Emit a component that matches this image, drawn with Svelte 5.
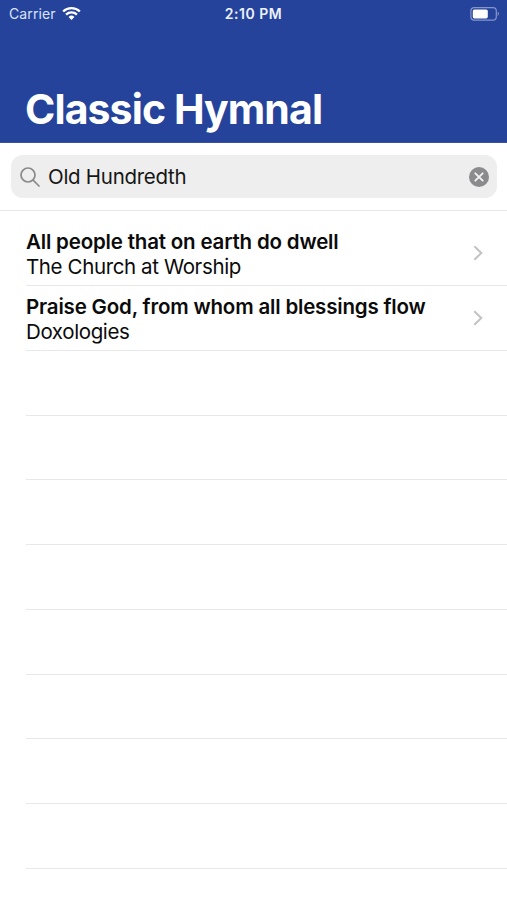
<script>
  let query = $state('Old Hundredth');

  const hymns = [
    { title: 'All people that on earth do dwell', section: 'The Church at Worship' },
    { title: 'Praise God, from whom all blessings flow', section: 'Doxologies' },
  ];
  const emptyRows = Array(8);
</script>

<div class="screen">
  <header>
    <div class="status">
      <div class="carrier">
        <span>Carrier</span>
        <svg class="wifi" viewBox="0 0 20 15" aria-hidden="true">
          <path d="M1.2 5.4a12.8 12.8 0 0 1 17.6 0" />
          <path d="M4.3 8.6a8.3 8.3 0 0 1 11.4 0" />
          <path class="dot" d="M6.9 11.2a4.5 4.5 0 0 1 6.2 0L10 14.4z" />
        </svg>
      </div>
      <span class="time">2:10 PM</span>
      <div class="power">
        <svg class="battery" viewBox="0 0 30 14" aria-hidden="true">
          <rect class="shell" x="0.9" y="0.7" width="25.4" height="12.4" rx="3.4" />
          <rect class="level" x="2.8" y="2.4" width="15" height="9" rx="1.6" />
          <path class="cap" d="M27.6 4.8c1.8.7 1.8 3.5 0 4.2z" />
        </svg>
      </div>
    </div>
    <h1>Classic Hymnal</h1>
  </header>

  <div class="search">
    <label class="field">
      <svg class="glass" viewBox="0 0 20 20" aria-hidden="true">
        <circle cx="8" cy="8" r="7" />
        <path d="M13.1 13.1 19 19" />
      </svg>
      <input type="text" bind:value={query} aria-label="Search" />
      <button class="clear" aria-label="Clear" onclick={() => (query = '')}>
        <svg viewBox="0 0 20 20" aria-hidden="true">
          <circle cx="10" cy="10" r="10" />
          <path d="m6.3 6.3 7.4 7.4M13.7 6.3l-7.4 7.4" />
        </svg>
      </button>
    </label>
  </div>

  <ul>
    {#each hymns as hymn}
      <li>
        <div class="text">
          <span class="title">{hymn.title}</span>
          <span class="section">{hymn.section}</span>
        </div>
        <svg class="chevron" viewBox="0 0 10 16" aria-hidden="true">
          <path d="m1.3 1.2 7 6.8-7 6.8" />
        </svg>
      </li>
    {/each}
    {#each emptyRows as _}
      <li></li>
    {/each}
  </ul>
</div>

<style>
  :global(body) {
    margin: 0;
    background: #fff;
  }

  .screen {
    height: 900px;
    overflow: hidden;
    background: #fff;
    color: #0b0b0b;
    font-family: Inter, 'Liberation Sans', sans-serif;
  }

  header {
    display: flex;
    flex-direction: column;
    justify-content: space-between;
    box-sizing: border-box;
    height: 143px;
    padding-bottom: 9px;
    border-bottom: 1px solid #3b519b;
    background: #25439b;
    color: #fff;
  }

  .status {
    display: grid;
    grid-template-columns: 1fr auto 1fr;
    align-items: center;
    height: 27px;
    padding: 0 7px 0 9px;
    font-size: 14px;
  }

  .carrier {
    display: flex;
    align-items: center;
    gap: 6px;
    color: #dbe4fb;
    letter-spacing: 0.1px;
  }

  .wifi {
    width: 19px;
    height: 15px;
    fill: none;
    stroke: #fff;
    stroke-width: 2.5;
  }

  .wifi .dot {
    fill: #fff;
    stroke: none;
  }

  .time {
    margin-left: -2px;
    color: #eef2ff;
    font-weight: 600;
    font-size: 14px;
    letter-spacing: 0.5px;
  }

  .power {
    display: flex;
    justify-content: flex-end;
  }

  .battery {
    width: 30px;
    height: 14px;
  }

  .shell {
    fill: none;
    stroke: #8496cb;
    stroke-width: 1.2;
  }

  .level {
    fill: #fff;
  }

  .cap {
    fill: #8496cb;
  }

  h1 {
    margin: 0;
    padding-left: 25px;
    font-size: 41px;
    line-height: 48px;
    font-weight: 700;
    letter-spacing: -0.9px;
  }

  .search {
    box-sizing: border-box;
    height: 68px;
    padding: 12px 10px 12px 11px;
    border-bottom: 1px solid #e8e8e8;
  }

  .field {
    display: flex;
    align-items: center;
    box-sizing: border-box;
    height: 43px;
    padding: 0 8px 0 9px;
    border-radius: 12px;
    background: #eee;
  }

  .glass {
    width: 20px;
    height: 20px;
    fill: none;
    stroke: #8a8a8d;
    stroke-width: 1.7;
    stroke-linecap: round;
  }

  input {
    flex: 1;
    min-width: 0;
    margin: 0 0 0 8px;
    padding: 0;
    border: 0;
    outline: 0;
    background: none;
    color: #161616;
    font-family: inherit;
    font-size: 20.5px;
    letter-spacing: -0.28px;
  }

  .clear {
    display: flex;
    padding: 0;
    border: 0;
    background: none;
  }

  .clear svg {
    width: 20px;
    height: 20px;
    fill: #8b8b8e;
    stroke: #f2f2f2;
    stroke-width: 1.9;
    stroke-linecap: round;
  }

  .clear circle {
    stroke: none;
  }

  ul {
    margin: 0;
    padding: 10.5px 0 0 26px;
    list-style: none;
  }

  li {
    display: flex;
    align-items: center;
    justify-content: space-between;
    box-sizing: border-box;
    height: 64.72px;
    padding-right: 24px;
    border-bottom: 1px solid #e8e8e8;
  }

  .text {
    display: flex;
    flex-direction: column;
    padding-top: 2px;
    font-size: 20.5px;
    line-height: 25px;
    white-space: nowrap;
  }

  .title {
    font-weight: 600;
    letter-spacing: -0.18px;
  }

  .section {
    letter-spacing: -0.38px;
  }

  .chevron {
    width: 10px;
    height: 16px;
    fill: none;
    stroke: #c2c2c4;
    stroke-width: 2;
  }
</style>
